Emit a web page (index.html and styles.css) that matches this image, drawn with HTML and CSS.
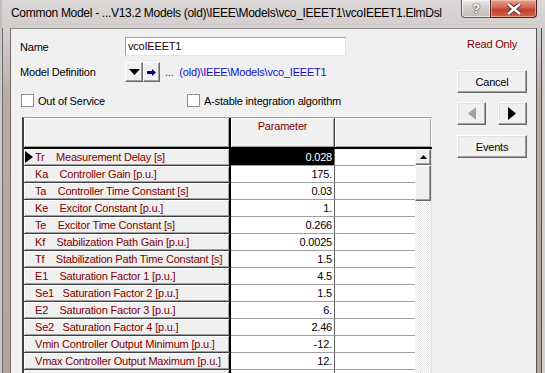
FILE: index.html
```html
<!DOCTYPE html>
<html>
<head>
  <meta charset="UTF-8">
  <title>Common Model</title>
  <link rel="stylesheet" href="styles.css">
</head>
<body>
<div class="window">
  <div class="titlebar">
    <span class="title">Common Model - ...V13.2 Models (old)\IEEE\Models\vco_IEEET1\vcoIEEET1.ElmDsl</span>
    <div class="caption">
      <div class="cap-btn cap-help">?</div>
      <div class="cap-btn cap-close">
        <svg width="16" height="12" viewBox="0 0 16 12"><path d="M2 1 L14 11 M14 1 L2 11" stroke="#5a2a22" stroke-width="4.5"/><path d="M2 1 L14 11 M14 1 L2 11" stroke="#fff" stroke-width="2.6"/></svg>
      </div>
    </div>
  </div>
  <div class="frame-body">
    <div class="frame-left"></div>
    <div class="client">
      <div class="main">
        <div class="form-row name-row">
          <span class="label">Name</span>
          <div class="textbox">vcoIEEET1</div>
        </div>
        <div class="form-row model-row">
          <span class="label">Model Definition</span>
          <button class="small-btn">
            <svg width="11" height="6" viewBox="0 0 11 6"><path d="M0 0 H11 L5.5 6 Z" fill="#000"/></svg>
          </button>
          <button class="small-btn narrow">
            <svg width="9" height="7" viewBox="0 0 9 7"><path d="M0 2 H5 V0 L9 3.5 L5 7 V5 H0 Z" fill="#000080"/></svg>
          </button>
          <span class="model-path">...  (old)\IEEE\Models\vco_IEEET1</span>
        </div>
        <div class="form-row check-row">
          <label class="check first"><span class="box"></span>Out of Service</label>
          <label class="check"><span class="box"></span>A-stable integration algorithm</label>
        </div>

        <div class="grid">
          <div class="grid-head">
            <div class="hd hd-rh"></div>
            <div class="hd hd-val">Parameter</div>
            <div class="hd hd-c3"></div>
          </div>
          <div class="grid-body">
            <div class="rows">
              <div class="row">
                <div class="rh"><span class="mark"><svg width="8" height="12" viewBox="0 0 8 12"><path d="M0 0 L8 6 L0 12 Z" fill="#000"/></svg></span>Tr    Measurement Delay [s]</div>
                <div class="val selected">0.028</div>
                <div class="c3"></div>
              </div>
              <div class="row">
                <div class="rh"><span class="mark"></span>Ka    Controller Gain [p.u.]</div>
                <div class="val">175.</div>
                <div class="c3"></div>
              </div>
              <div class="row">
                <div class="rh"><span class="mark"></span>Ta    Controller Time Constant [s]</div>
                <div class="val">0.03</div>
                <div class="c3"></div>
              </div>
              <div class="row">
                <div class="rh"><span class="mark"></span>Ke    Excitor Constant [p.u.]</div>
                <div class="val">1.</div>
                <div class="c3"></div>
              </div>
              <div class="row">
                <div class="rh"><span class="mark"></span>Te    Excitor Time Constant [s]</div>
                <div class="val">0.266</div>
                <div class="c3"></div>
              </div>
              <div class="row">
                <div class="rh"><span class="mark"></span>Kf    Stabilization Path Gain [p.u.]</div>
                <div class="val">0.0025</div>
                <div class="c3"></div>
              </div>
              <div class="row">
                <div class="rh"><span class="mark"></span>Tf    Stabilization Path Time Constant [s]</div>
                <div class="val">1.5</div>
                <div class="c3"></div>
              </div>
              <div class="row">
                <div class="rh"><span class="mark"></span>E1    Saturation Factor 1 [p.u.]</div>
                <div class="val">4.5</div>
                <div class="c3"></div>
              </div>
              <div class="row">
                <div class="rh"><span class="mark"></span>Se1   Saturation Factor 2 [p.u.]</div>
                <div class="val">1.5</div>
                <div class="c3"></div>
              </div>
              <div class="row">
                <div class="rh"><span class="mark"></span>E2    Saturation Factor 3 [p.u.]</div>
                <div class="val">6.</div>
                <div class="c3"></div>
              </div>
              <div class="row">
                <div class="rh"><span class="mark"></span>Se2   Saturation Factor 4 [p.u.]</div>
                <div class="val">2.46</div>
                <div class="c3"></div>
              </div>
              <div class="row">
                <div class="rh"><span class="mark"></span>Vmin Controller Output Minimum [p.u.]</div>
                <div class="val">-12.</div>
                <div class="c3"></div>
              </div>
              <div class="row">
                <div class="rh"><span class="mark"></span>Vmax Controller Output Maximum [p.u.]</div>
                <div class="val">12.</div>
                <div class="c3"></div>
              </div>
              <div class="row">
                <div class="rh"><span class="mark"></span></div>
                <div class="val"></div>
                <div class="c3"></div>
              </div>
            </div>
            <div class="vscroll">
              <div class="sb-btn">
                <svg width="7" height="4" viewBox="0 0 7 4"><path d="M0 4 L3.5 0 L7 4 Z" fill="#000"/></svg>
              </div>
              <div class="sb-thumb"></div>
              <div class="sb-track"></div>
            </div>
          </div>
        </div>
      </div>

      <div class="side">
        <div class="readonly">Read Only</div>
        <button class="btn cancel">Cancel</button>
        <div class="nav">
          <button class="btn nav-btn" disabled>
            <svg width="9" height="13" viewBox="0 0 9 13"><path d="M9 0 L1 6.5 L9 13 Z" fill="#fff" transform="translate(1 1)"/><path d="M9 0 L1 6.5 L9 13 Z" fill="#a0a0a0"/></svg>
          </button>
          <button class="btn nav-btn">
            <svg width="9" height="13" viewBox="0 0 9 13"><path d="M0 0 L8 6.5 L0 13 Z" fill="#000"/></svg>
          </button>
        </div>
        <button class="btn events">Events</button>
      </div>
    </div>
    <div class="frame-right"></div>
  </div>
</div>
</body>
</html>
```

FILE: styles.css
```css
* {
  box-sizing: border-box;
}
body {
  margin: 0;
  width: 545px;
  height: 373px;
  overflow: hidden;
  background: #d4d0d0;
  font-family: "Liberation Sans", Arial, sans-serif;
  font-size: 11px;
  letter-spacing: -0.2px;
  color: #000;
}
button {
  font: inherit;
  letter-spacing: inherit;
  padding: 0;
  margin: 0;
}
.window {
  display: flex;
  flex-direction: column;
  height: 373px;
}

/* title bar */
.titlebar {
  height: 28px;
  flex: none;
  display: flex;
  align-items: flex-start;
  background: linear-gradient(#dcd8d8, #d3cdcc);
  border-left: 2px solid #bdbdbd;
}
.title {
  padding: 6px 0 0 9px;
  font-size: 12px;
  line-height: 15px;
  letter-spacing: -0.3px;
  white-space: nowrap;
  color: #000;
}
.caption {
  margin-left: auto;
  margin-right: 8px;
  display: flex;
}
.cap-btn {
  height: 18px;
  display: flex;
  align-items: center;
  justify-content: center;
  border: 1px solid #5d5858;
  border-top: none;
}
.cap-help {
  width: 29px;
  border-radius: 0 0 0 4px;
  border-right: none;
  background: linear-gradient(#ebe8e8, #d2cccb 50%, #c3bcba);
  box-shadow: inset 0 0 0 1px rgba(255, 255, 255, 0.6);
  color: #fff;
  font-weight: bold;
  font-size: 13px;
  text-shadow: 0 0 2px #333, 0 0 1px #333;
}
.cap-close {
  width: 47px;
  border-radius: 0 0 4px 0;
  border-color: #4d1f1a;
  background: linear-gradient(#e6a394, #d3614c 45%, #c2412c 55%, #d5604a);
  box-shadow: inset 0 0 0 1px rgba(255, 220, 200, 0.5);
}

/* frame */
.frame-body {
  flex: 1;
  display: flex;
  min-height: 0;
}
.frame-left {
  width: 10px;
  flex: none;
  background:
    linear-gradient(to right, #c9c9c9 0 2px, #6e6e6e 2px 3px, transparent 3px),
    linear-gradient(#d5d1d1, #bba9a5 70px, #b5a09c);
}
.frame-right {
  width: 9px;
  flex: none;
  background:
    linear-gradient(to right, #555 0 1px, transparent 1px 5px, #4a4a4a 5px 6px, #cfcfcf 6px),
    linear-gradient(#d5d1d1, #bca8a4 70px, #b7a39f);
}
.client {
  flex: 1;
  display: flex;
  background: #f0f0f0;
  border-top: 1px solid #8c8c8c;
  border-left: 1px solid #6d6d6d;
  overflow: hidden;
}

/* form */
.main {
  flex: 1;
  padding: 8px 0 0 9px;
}
.form-row {
  display: flex;
  align-items: center;
}
.label {
  width: 105px;
  flex: none;
}
.name-row {
  height: 19px;
}
.textbox {
  width: 221px;
  height: 19px;
  line-height: 16px;
  padding-left: 2px;
  background: #fff;
  border: 1px solid;
  border-color: #a0a0a0 #e3e3e3 #e3e3e3 #a0a0a0;
  color: #200;
}
.model-row {
  height: 20px;
  margin-top: 6px;
}
.small-btn {
  width: 18px;
  height: 20px;
  display: flex;
  align-items: center;
  justify-content: center;
  background: #f0f0f0;
  border: 1px solid;
  border-color: #fff #696969 #696969 #fff;
  box-shadow: inset -1px -1px #a0a0a0;
}
.small-btn.narrow {
  width: 17px;
}
.model-path {
  margin-left: 5px;
  white-space: pre;
  color: #1010c8;
}
.check-row {
  height: 13px;
  margin-top: 12px;
}
.check {
  display: flex;
  align-items: center;
}
.check.first {
  width: 166px;
  margin-left: 1px;
}
.box {
  width: 13px;
  height: 13px;
  margin-right: 4px;
  background: #fff;
  border: 1px solid #8e8f8f;
}

/* grid */
.grid {
  margin: 10px 0 0 2px;
  width: 410px;
  border-left: 2px solid #404040;
  border-top: 1px solid #a0a0a0;
}
.grid-head {
  display: flex;
  height: 31px;
  border-bottom: 2px solid #000;
}
.hd {
  background: #f0f0f0;
  box-shadow: inset 1px 1px #fff, inset -1px -1px #a0a0a0;
}
.hd-rh {
  width: 207px;
  border-right: 2px solid #000;
}
.hd-val {
  width: 104px;
  border-right: 1px solid #404040;
  text-align: center;
  padding-top: 2px;
  color: #800000;
}
.hd-c3 {
  width: 97px;
  background: #f0f0f0;
  border-right: 1px solid #fff;
}
.grid-body {
  display: flex;
}
.rows {
  width: 391px;
}
.row {
  display: flex;
  height: 17px;
}
.rh {
  width: 207px;
  line-height: 16px;
  white-space: pre;
  overflow: hidden;
  color: #800000;
  background: #f0f0f0;
  border-right: 2px solid #000;
  border-bottom: 1px solid #404040;
  box-shadow: inset 1px 1px #fff, inset -1px -1px #a0a0a0;
}
.mark {
  display: inline-block;
  width: 11px;
  height: 16px;
  vertical-align: top;
  padding: 2px 0 0 1px;
}
.mark svg {
  display: block;
}
.val {
  width: 104px;
  line-height: 16px;
  text-align: right;
  padding-right: 2px;
  background: #fff;
  border-right: 1px solid #606060;
  border-bottom: 1px solid #a0a0a0;
}
.val.selected {
  background: #000;
  color: #fff;
}
.c3 {
  width: 80px;
  background: #fff;
  border-bottom: 1px solid #a0a0a0;
}
.vscroll {
  width: 17px;
  display: flex;
  flex-direction: column;
  height: 240px;
  border-right: 1px solid #e0e0e0;
}
.sb-btn {
  height: 16px;
  flex: none;
  display: flex;
  align-items: center;
  justify-content: center;
  background: #f0f0f0;
  border: 1px solid;
  border-color: #fff #696969 #696969 #fff;
  box-shadow: inset -1px -1px #a0a0a0;
}
.sb-thumb {
  height: 36px;
  flex: none;
  background: #f0f0f0;
  border: 1px solid;
  border-color: #fff #696969 #696969 #fff;
  box-shadow: inset -1px -1px #a0a0a0;
}
.sb-track {
  flex: 1;
  background: repeating-conic-gradient(#fff 0 25%, #e6e6e6 0 50%) 0 0 / 2px 2px;
}

/* side buttons */
.side {
  width: 70px;
  flex: none;
  margin: 0 9px 0 0;
  padding-top: 8px;
  display: flex;
  flex-direction: column;
}
.readonly {
  height: 14px;
  line-height: 14px;
  text-align: center;
  color: #800000;
}
.btn {
  height: 23px;
  background: #f0f0f0;
  border: 1px solid;
  border-color: #fff #696969 #696969 #fff;
  box-shadow: inset -1px -1px #a0a0a0, inset 1px 1px #e3e3e3;
  color: #000;
}
.cancel {
  margin-top: 19px;
}
.nav {
  display: flex;
  justify-content: space-between;
  margin-top: 9px;
}
.nav-btn {
  width: 29px;
  display: flex;
  align-items: center;
  justify-content: center;
}
.events {
  margin-top: 10px;
}
```
